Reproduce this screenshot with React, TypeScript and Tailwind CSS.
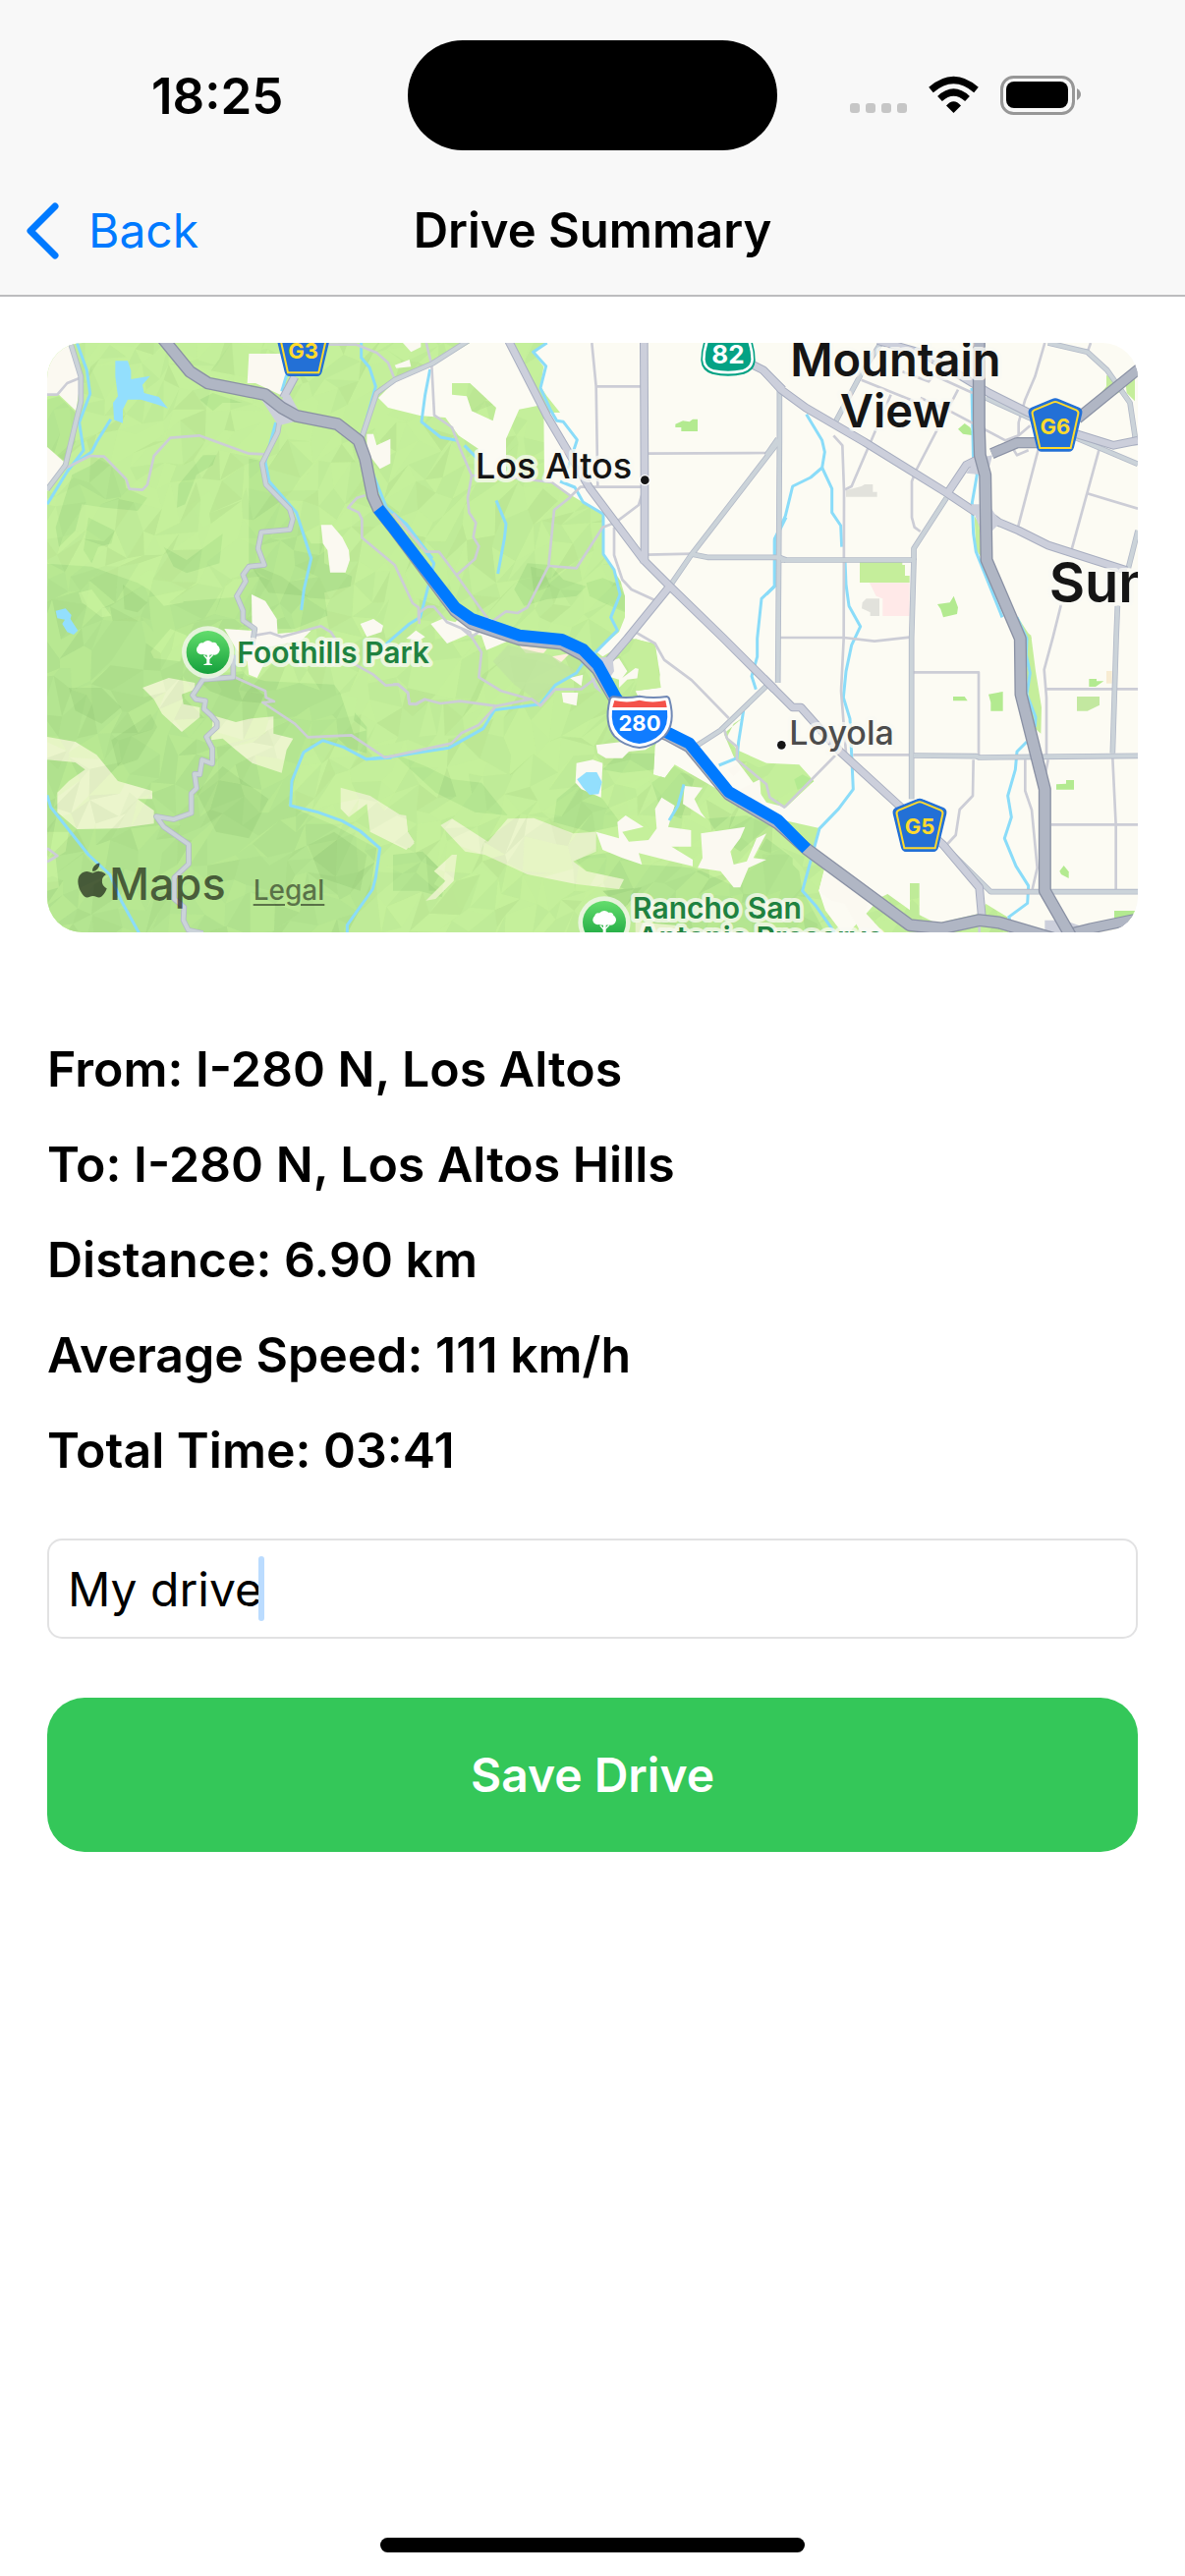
import { useState } from "react";
import type { ReactNode } from "react";
import { FaApple } from "react-icons/fa";

/* Map drawing: one unit is a third of a pixel. Each shape is given
   relative to the map sheet it lies on. */
type Sheet = "nw" | "n" | "ne" | "sw" | "s" | "se";
type Shape = [Sheet, string];

const SHIFT: Record<Sheet, string> = {
  nw: "translate(0 0)",
  n: "translate(1080 0)",
  ne: "translate(2220 0)",
  sw: "translate(0 900)",
  s: "translate(1080 900)",
  se: "translate(2220 900)",
};

const HILLS =
  "M0 0H1350L1315 27 1200 95 1085 145 1035 195 1065 225 1165 250 1240 255 1280 310 1340 350 1350 430 1560 450 1620 490 1720 550 1722 670 1775 755 1788 800 1788 865 1770 910 1700 970 1720 985 1810 930 1880 945 1895 1040 1890 1080 1820 1090 1830 1110 1900 1200 1880 1260 1875 1345 1910 1355 1940 1315 2010 1355 2070 1390 2180 1420 2250 1480 2385 1510 2360 1580 2400 1620 2380 1700 2400 1760 2460 1840H0Z M1425 320L1465 230 1540 215 1542 450 1425 440Z M1450 27H1550L1510 60 1540 100 1530 160 1550 190 1590 240 1550 240Z M1260 150H1315L1395 225 1385 265 1320 235 1305 190 1260 185Z M2150 1170L2120 1190 2100 1230 2130 1270 2220 1310 2320 1315 2365 1365 2280 1445 2220 1430 2180 1370 2120 1290 2090 1220Z M2460 1840L2570 1720 2590 1710 2660 1760 2740 1800 2870 1770 2890 1740 2955 1780 2960 1840Z M2658 1677H2687V1800H2658Z";

const DARK: Shape[] = [
  ["nw", "M24 200L60 190 110 240 110 330 80 390 24 345Z"],
  ["nw", "M160 400L190 375 260 440 265 470 330 500 300 540 200 530 130 520 110 600 60 650 50 590 100 430Z"],
  ["nw", "M500 370L540 370 530 400 480 430 445 520 420 530 425 460Z"],
  ["nw", "M640 380L690 390 700 460 770 540 830 640 870 640 870 700 955 740 950 770 870 790 880 860 780 900 640 900 600 800 640 700Z"],
  ["nw", "M490 200L530 180 620 210 560 210 530 235Z"],
  ["nw", "M150 560L230 600 220 640 180 650 160 700 135 660Z"],
  ["nw", "M380 650L450 690 560 610 550 700 450 730 410 710Z"],
  ["nw", "M0 700L160 710 300 760 400 820 640 800 640 930 0 930Z"],
  ["n", "M410 700L480 705 520 750 590 770 560 800 470 810 400 830 370 780Z"],
  ["n", "M590 760L640 745 690 765 708 800 708 850 640 820 600 800Z"],
  ["sw", "M0 0H420L500 140 620 130 690 200 780 290 860 340 800 380 760 540 900 600 1030 670 1010 800 940 930H0Z"],
  ["sw", "M620 140L690 160 900 170 950 240 1000 300 1000 380 820 330 700 230Z"],
  ["s", "M0 380L100 420 180 460 270 470 350 570 250 560 130 500Z"],
  ["s", "M500 520L560 470 640 520 700 600 600 620 490 590Z"],
  ["s", "M0 690L90 680 160 750 150 820 80 800 0 800Z"],
  ["s", "M550 700L680 680 760 720 920 730 1050 790 1140 640 1220 700 1220 930H820L720 800 600 750Z"],
  ["s", "M690 380L800 380 800 430 700 440 640 430Z"],
  ["s", "M790 470L860 420 920 460 880 580 820 560Z"],
  ["s", "M960 580L1080 570 1150 600 1060 680 1000 640Z"],
  ["se", "M0 690L60 700 100 740 110 800 180 930H0Z"],
];

const SHADE: Shape[] = [
  ["sw", "M90 180L190 180 250 240 190 290 110 250Z"],
  ["sw", "M220 340L340 260 360 300 300 400 240 420Z"],
  ["sw", "M490 160L620 150 720 230 600 220 520 190Z"],
  ["sw", "M480 500L560 420 700 520 640 640 540 620Z"],
  ["sw", "M820 660L900 620 1000 690 980 800 860 760Z"],
  ["nw", "M255 765L330 820 300 850 260 840Z"],
  ["nw", "M640 700L740 740 820 800 700 790Z"],
  ["s", "M100 690L150 740 125 780 160 800 110 800Z"],
  ["s", "M640 800L760 790 700 860Z"],
  ["n", "M420 710L460 720 480 770 430 790Z"],
];

const BRIGHT: Shape[] = [
  ["nw", "M300 740L340 720 430 780 440 820 380 830Z"],
  ["nw", "M120 790L160 780 220 860 190 865 130 820Z"],
  ["nw", "M460 520L520 480 560 560 500 590Z"],
  ["sw", "M340 70L400 0 450 20 430 100 350 90Z"],
  ["sw", "M920 200L970 210 960 280 1000 310 960 320Z"],
  ["sw", "M800 400L850 380 920 430 860 440Z"],
  ["sw", "M24 620L90 620 80 680 50 700 60 790 24 800Z"],
  ["s", "M180 790L260 720 350 790 300 880 200 850Z"],
  ["s", "M700 480L780 450 790 520 720 560Z"],
];

const MEADOW: Shape[] = [
  ["sw", "M315 180L395 150 475 165 475 185 435 200 440 230 490 240 490 270 435 315 375 260 350 215Z"],
  ["sw", "M24 330L110 345 175 385 240 465 345 495 345 520 300 520 350 555 350 595 240 610 115 612 55 560 55 500 90 465 140 430 110 408 24 400Z"],
  ["sw", "M530 265L600 285 640 275 715 268 715 320 775 335 755 370 740 440 650 410 600 370 560 335 525 340Z"],
  ["sw", "M920 485L1010 510 1120 580 1125 620 1145 650 1120 675 1010 620 1000 535 945 575 920 550Z"],
  ["s", "M145 600L180 580 290 650 350 580 430 578 550 625 620 620 620 680 550 710 590 740 705 765 690 795 560 780 410 750 280 690 220 680Z"],
  ["s", "M0 565L40 570 45 620 65 655 50 670 0 640Z"],
  ["s", "M100 830L160 770 125 740 180 690 195 690 185 770 130 825Z"],
  ["s", "M740 895L860 905 900 930H740Z"],
];

const OPEN: Shape[] = [
  ["nw", "M0 0H88L128 130 112 235 60 185 24 190 0 190Z"],
  ["nw", "M24 345L75 390 55 430 24 480Z"],
  ["nw", "M640 60H760L745 190 660 150H635Z"],
  ["nw", "M1000 305L1020 305 1030 340 1072 320V395L1040 412 1000 360Z"],
  ["nw", "M860 583L893 583 925 620 945 660 948 690 935 728H888L880 660 866 640Z"],
  ["nw", "M648 795L690 815 725 870 728 920H650Z"],
  ["nw", "M565 900L640 905 730 915 830 905 800 935 680 960 690 1000 665 1050 640 1040 635 1000 600 960Z"],
  ["nw", "M980 885L1020 870 1050 890 1045 910 1000 925Z"],
  ["nw", "M1085 95L1130 78 1135 100 1090 104Z"],
  ["nw", "M1110 27H1165V40L1135 55Z"],
  ["nw", "M1120 930L1150 905 1178 925 1160 935Z"],
  ["n", "M115 885L150 870 190 880 220 850 300 870 370 930 285 965 270 920 235 915 165 945Z"],
  ["s", "M515 195L565 195 560 235 520 225Z"],
  ["s", "M540 150L580 140 575 175Z"],
  ["s", "M620 355L700 345 800 350 770 370 720 375 700 395 650 395 625 380Z"],
  ["s", "M560 410L610 400 640 410 635 515 575 490 557 470Z"],
  ["s", "M660 100L690 90 715 130 700 150 740 120 760 125 755 150 715 155 690 180 690 155 655 145Z"],
  ["s", "M890 480L945 485 920 520 940 560 955 580 885 535Z"],
  ["s", "M820 515L860 540 840 605 910 615V665L850 665 915 705 915 725 830 705 750 685 760 720 700 700 640 675 620 620 690 640 685 590 710 570 765 605 700 620 720 650 780 645 805 610 800 550Z"],
  ["s", "M940 625L1075 605 1060 640 1030 680 1040 720 1080 710 1110 640 1140 625 1100 700 1140 705 1085 730 1060 790 1040 790 1000 740 930 730 945 700Z"],
  ["s", "M1060 490L1120 460 1125 535 1080 520Z"],
  ["s", "M1020 430L1050 415 1062 430 1040 450Z"],
  ["se", "M175 745L250 770 310 830 300 865 360 930H290L240 840 200 830 160 800Z"],
];

const PARKS: Shape[] = [
  ["n", "M862 275L885 265 905 268 915 260H930V297H880V285H862Z"],
  ["ne", "M585 290L605 273 622 285 632 310 600 305Z"],
  ["ne", "M522 825L560 820 572 800 585 835 582 855 540 865 532 840Z"],
  ["se", "M570 207H605L614 220H570Z"],
  ["se", "M678 200L722 192V251H685V225Z"],
  ["se", "M985 153H1008V160H1030L1005 177H985Z"],
  ["se", "M885 475L915 473V462H939V491H885Z"],
  ["se", "M895 740L908 723 923 742V762L900 750Z"],
  ["se", "M1062 861H1134V893H1062Z"],
  ["se", "M85 460L110 445 130 455 145 466 95 492Z"],
];

const LIGHT_PARKS: Shape[] = [
  ["ne", "M285 695H415V705H423V738H437V759H285Z"],
  ["ne", "M1038 125L1080 150 1090 170 1040 200 995 235 990 220 1038 160Z"],
  ["ne", "M1095 135L1125 130V205L1100 180Z"],
  ["ne", "M635 555L650 580 655 680 640 660Z"],
  ["ne", "M668 740L690 780 680 765Z"],
  ["ne", "M765 860L810 930 800 930Z"],
  ["se", "M780 0L808 20 822 130 840 240 838 320 815 300 800 200Z"],
  ["s", "M710 90L740 30 800 50 818 180 740 190 750 120Z"],
];

const WATER: Shape[] = [
  ["nw", "M232 82H270L280 112V138L338 128 315 155 320 180 365 192 393 227 360 215 310 200 270 200 255 230V272L228 262 225 210 240 190 232 130Z"],
  ["nw", "M50 845L80 838 98 858 95 870 118 905 105 918 85 910 70 885 78 872 55 868Z"],
  ["s", "M562 460L590 438H622L638 468 628 505 600 507 580 485Z"],
];

const STREAMS: Shape[] = [
  ["nw", "M115 27L145 110 155 182 122 270 135 355 85 420 24 520"],
  ["nw", "M218 260L175 330 160 360 85 410"],
  ["nw", "M755 125L740 175"],
  ["nw", "M722 270L690 390 702 450 785 545 830 685 808 780 800 843"],
  ["nw", "M983 27V72L1008 102 1027 160 985 310"],
  ["nw", "M1020 430L1060 530 1120 580 1200 685"],
  ["n", "M113 108L98 185 87 268 145 315 195 325"],
  ["n", "M218 340L262 385"],
  ["n", "M470 27L428 55 467 98 450 165 480 230 500 265 520 268 562 323 550 360 535 410"],
  ["n", "M510 450L555 468 580 513 642 550 642 672 675 720 693 795 665 865 685 905 620 970 580 1005 560 1035 495 1072 450 1130 310 1148 275 1205 170 1264 0 1290 -83 1298"],
  ["n", "M315 508L345 580 340 625 320 732"],
  ["n", "M0 548L40 580 125 700 105 780 83 865 50 885 0 928 -30 955"],
  ["n", "M1200 560L1165 630V770L1125 808 1112 930 1112 985 1095 1045 1108 1085"],
  ["ne", "M122 245L170 325 178 360 170 408 135 438 80 465 58 555 40 595 25 625V770L0 795"],
  ["ne", "M170 408L200 472V545L227 585 230 650"],
  ["ne", "M240 690L243 765 252 830 287 893 260 950 243 1030 235 1110 255 1175 265 1390 220 1450 162 1510 110 1700 150 1745 210 1830"],
  ["ne", "M627 165L632 400 643 430 628 515 632 610 640 665 720 865"],
  ["ne", "M765 865L795 930 793 980 805 1035 795 1100 822 1170 820 1200"],
  ["se", "M795 345L765 375 760 430 737 510 748 575 727 640 762 725 800 785 797 838 740 880 745 895"],
  ["s", "M1070 250L1055 345 1050 395 995 417"],
  ["s", "M888 475L870 540 843 585"],
  ["sw", "M24 508L35 545 150 690 215 750 250 830 305 930"],
  ["sw", "M1075 394L998 398 930 362 865 341 807 377 771 465 767 540 850 560 925 587 980 618 1040 670 1027 760 1018 795 940 905V930"],
];

const LANES: Shape[] = [
  ["nw", "M24 185H55L85 150 122 135"],
  ["nw", "M75 412L155 372 198 374 265 443 275 473 315 476 330 460 350 372 400 317 488 310 640 365 690 367"],
  ["nw", "M880 32H968L1030 57 1065 88 1085 138"],
  ["nw", "M995 493L970 500 943 530 975 545 985 565V622L1085 705 1140 822 1158 835V875"],
  ["nw", "M660 920L705 912 740 925 860 892 890 910 903 930 930 990 1020 1040 1058 1073 1097 1070 1125 1095 1130 1130 1150 1131 1178 1115"],
  ["n", "M95 0L118 95 126 248 180 285 205 350 240 432 228 500 232 545 253 577 245 620 262 648 250 687 195 735"],
  ["n", "M0 548L100 665H140L195 738 290 870"],
  ["n", "M240 432L380 440 485 453 543 495 572 467H765"],
  ["n", "M543 497L492 537 475 708 410 835 380 852 345 847 300 880 240 925 235 910 165 880 125 833H105L80 850V885"],
  ["n", "M475 708L560 715 640 590 680 575 750 522 760 490"],
  ["n", "M607 27L620 160 625 465"],
  ["n", "M620 160H765"],
  ["n", "M675 590V675L700 750 728 780 805 815"],
  ["n", "M775 365L1145 363"],
  ["n", "M775 674L915 671"],
  ["s", "M0 170L15 170 45 195 50 228 68 230 97 215 145 228 205 221 315 236 420 215 330 190 262 148 270 72 240 25 210 0"],
  ["s", "M315 236L260 295 210 318 178 350 0 388 -25 393 -127 325 -260 331 -300 290 -398 225 -363 222 -388 210 -390 190 -490 145"],
  ["s", "M420 212L450 235 495 185 575 184 620 150"],
  ["s", "M740 10L800 45 828 95 912 157 1025 273"],
  ["s", "M1010 305L1020 335 1050 360V400L1140 475 1150 515 1195 545 1350 387"],
  ["ne", "M205 310L232 340 237 480 236 930 228 1090 243 1280"],
  ["ne", "M290 140L450 205"],
  ["ne", "M380 185L260 465 240 475"],
  ["ne", "M585 170L455 420 444 450V560L452 590 470 603"],
  ["ne", "M415 115L495 145 510 125 630 180"],
  ["ne", "M470 195L560 235 730 325 770 310 805 280"],
  ["ne", "M850 27L820 130 790 200 770 270 770 310"],
  ["ne", "M832 345L768 590"],
  ["ne", "M1015 355L930 665"],
  ["ne", "M980 487L1134 533"],
  ["ne", "M990 27L982 50"],
  ["ne", "M900 825L875 925 848 1025 855 1110V1290"],
  ["ne", "M750 345L765 370 800 355"],
  ["se", "M42 27H237L330 38 437 26"],
  ["se", "M450 133H648V385"],
  ["se", "M855 184H1134"],
  ["se", "M265 385H437"],
  ["se", "M632 400L630 510 590 552 578 630 550 660"],
  ["se", "M790 400V495L810 553 827 730 812 795"],
  ["se", "M870 598H1134"],
  ["se", "M1057 395L1067 600V795"],
  ["se", "M860 400L845 480"],
  ["se", "M650 905V930"],
  ["sw", "M24 670L55 693 24 712"],
];

const STREETS: Shape[] = [
  ["nw", "M95 27L127 130V205L80 400 24 475"],
  ["nw", "M735 255L728 300 680 395 692 460 765 535 774 565 765 597 678 605 668 655 687 705 640 710 622 735 630 755 603 800 622 845V875L658 900 650 950"],
  ["sw", "M592 80V148L500 155 468 203 477 215 507 220 503 245 525 265 542 285V300L510 330 528 365V412L497 400 490 445 474 443 480 487 464 503V563L410 582 357 573 380 605 456 658V718L412 760V825L442 850 440 890 455 920 500 930"],
  ["nw", "M985 315L1030 180 1085 140 1200 90 1310 20"],
  ["n", "M1180 165V330L1178 650 1175 1065"],
  ["n", "M1180 325L910 675 845 770"],
  ["n", "M915 673L960 682H1178"],
  ["n", "M1180 682L1200 690"],
  ["ne", "M45 690H450L443 930V1420"],
  ["ne", "M450 690V655L550 500"],
  ["ne", "M210 270L290 120 350 27"],
  ["ne", "M0 370L35 320"],
  ["ne", "M860 27L980 55 1040 110 1110 210 1125 310V340"],
  ["ne", "M670 195L800 255 940 315 1134 397"],
  ["ne", "M1134 600L1105 715"],
  ["ne", "M1072 830L1068 930 1057 1280"],
  ["s", "M930 355L1000 310 1150 165"],
  ["se", "M450 387L640 389 650 393 830 391 1134 388"],
  ["se", "M540 660L685 803H1134"],
];

const AVENUES: Shape[] = [
  ["n", "M350 15L470 250 600 470 765 690 845 770 1010 930 1165 1085"],
  ["n", "M766 27L768 440V700"],
  ["n", "M845 770L715 930 655 1000"],
  ["n", "M1090 90L1130 110 1190 170"],
  ["ne", "M-10 110L45 170 120 225 300 330 550 485 640 545"],
  ["ne", "M340 20L480 60 680 180 800 240 930 300 1060 340 1134 325"],
  ["ne", "M550 490L610 400 640 385"],
  ["ne", "M690 560L710 575 770 600 860 645 1000 690 1100 722"],
  ["se", "M-10 150L80 240H105L225 375 400 535 540 660 650 790 658 880"],
  ["nw", "M780 130L745 195"],
];

const HIGHWAYS: Shape[] = [
  ["nw", "M370 5L460 115 515 150 690 185 740 225 785 250 910 275 975 325 995 380 1018 495 1035 533 1080 590 1270 845 1320 884 1465 932 1595 945 1660 980 1705 1025 1760 1120 1810 1180 1920 1225 1985 1260 2105 1405 2255 1494 2342 1572 2658 1805 2755 1815 2870 1790 2930 1797 3110 1850"],
  ["ne", "M649 15V280L652 370 668 430 672 690 775 930 777 1100 850 1390V1700L930 1840"],
];

const RAMPS: Shape[] = [
  ["ne", "M688 365L765 332H840"],
  ["ne", "M950 258L1145 100"],
  ["se", "M930 930L990 915 1134 885"],
];

const ROUTE =
  "M1035 533L1080 590 1270 835 1320 870 1465 920 1595 933 1660 963 1705 1010 1760 1110 1810 1175 1920 1218 1985 1250 2105 1398 2255 1484 2342 1572";

/* Triangulated relief: a jittered grid whose facets vary slightly in tone. */
function buildRelief() {
  let seed = 17;
  const rnd = () => {
    seed = (seed * 1103515245 + 12345) % 2147483648;
    return seed / 2147483648;
  };
  const cols = 52;
  const rows = 32;
  const step = 60;
  const pts: [number, number][][] = [];
  for (let r = 0; r <= rows; r++) {
    const line: [number, number][] = [];
    for (let c = 0; c <= cols; c++) {
      line.push([
        Math.round(c * step + (rnd() - 0.5) * 60),
        Math.round(r * step + (rnd() - 0.5) * 80),
      ]);
    }
    pts.push(line);
  }
  const light: string[] = [];
  const dark: string[] = [];
  const darker: string[] = [];
  for (let r = 0; r < rows; r++) {
    for (let c = 0; c < cols; c++) {
      const [a, b, d, e] = [pts[r][c], pts[r][c + 1], pts[r + 1][c], pts[r + 1][c + 1]];
      for (const t of [[a, b, d], [b, e, d]]) {
        const k = rnd();
        const path = "M" + t.map((p) => p.join(" ")).join("L") + "Z";
        if (k < 0.28) light.push(path);
        else if (k < 0.55) dark.push(path);
        else if (k < 0.68) darker.push(path);
      }
    }
  }
  return { light: light.join(""), dark: dark.join(""), darker: darker.join("") };
}
const RELIEF = buildRelief();

function Areas({ items, fill, opacity = 1 }: { items: Shape[]; fill: string; opacity?: number }) {
  return (
    <g fill={fill} opacity={opacity}>
      {items.map(([sheet, d], i) => (
        <path key={i} d={d} transform={SHIFT[sheet]} />
      ))}
    </g>
  );
}

function Lines({ items, stroke, width }: { items: Shape[]; stroke: string; width: number }) {
  return (
    <g fill="none" stroke={stroke} strokeWidth={width} strokeLinejoin="round">
      {items.map(([sheet, d], i) => (
        <path key={i} d={d} transform={SHIFT[sheet]} />
      ))}
    </g>
  );
}

function CountyShield({ x, y, label }: { x: number; y: number; label: string }) {
  return (
    <g transform={`translate(${x} ${y})`}>
      <path
        d="M-9 -80Q0 -84 9 -80L72 -54Q82 -49 80 -38L55 66Q52 77 42 77H-42Q-52 77 -55 66L-80 -38Q-82 -49 -72 -54Z"
        fill="#2370d6"
        stroke="#2370d6"
        strokeWidth="4"
      />
      <path
        d="M-6 -72Q0 -74 6 -72L64 -48Q72 -44 70 -36L47 68H-47L-70 -36Q-72 -44 -64 -48Z"
        fill="none"
        stroke="#ffda2d"
        strokeWidth="6"
      />
      <text y="25" textAnchor="middle" fontSize="66" fontWeight="700" fill="#ffda2d">
        {label}
      </text>
    </g>
  );
}

function TreePin({ x, y }: { x: number; y: number }) {
  return (
    <g transform={`translate(${x} ${y})`}>
      <circle r="80" fill="#eef6e8" opacity="0.85" />
      <circle r="66" fill="url(#pin)" />
      <g fill="#fff">
        <circle cx="-20" cy="-8" r="15" />
        <circle cx="20" cy="-8" r="16" />
        <circle cx="0" cy="-18" r="18" />
        <circle cx="-18" cy="-18" r="11" />
        <circle cx="17" cy="-20" r="11" />
        <ellipse cx="0" cy="-5" rx="30" ry="13" />
        <path d="M-3 0H5V34L13 37V39H-13V37L-4 34V22L-14 10-11 8-3 16Z" />
        <path d="M4 22L17 8 14 6 4 16Z" />
      </g>
    </g>
  );
}

function Label(props: { x: number; y: number; size: number; weight: number; fill: string; children: ReactNode; middle?: boolean }) {
  return (
    <text
      x={props.x}
      y={props.y}
      fontSize={props.size}
      fontWeight={props.weight}
      fill={props.fill}
      textAnchor={props.middle ? "middle" : "start"}
      stroke="#fafaf4"
      strokeOpacity="0.75"
      strokeWidth="24"
      strokeLinejoin="round"
      paintOrder="stroke"
    >
      {props.children}
    </text>
  );
}

function RouteMap() {
  return (
    <svg viewBox="24 27 3330 1800" className="block h-auto w-full" role="img" aria-label="Map of the drive" fontFamily="Inter, sans-serif">
      <defs>
        <clipPath id="hills">
          <path d={HILLS} />
        </clipPath>
        <linearGradient id="pin" x1="0" y1="0" x2="0" y2="1">
          <stop offset="0" stopColor="#63dd6c" />
          <stop offset="1" stopColor="#14a03c" />
        </linearGradient>
      </defs>
      <rect x="0" y="0" width="3400" height="1850" fill="#fcfbf3" />
      <path d={HILLS} fill="#c4ef9b" />
      <g clipPath="url(#hills)">
        <Areas items={DARK} fill="#b4e591" />
        <Areas items={SHADE} fill="#a9db88" />
        <Areas items={BRIGHT} fill="#c4f09b" />
        <Areas items={MEADOW} fill="#ebf5cc" />
        <path d={RELIEF.light} fill="#ccf99a" opacity="0.16" />
        <path d={RELIEF.dark} fill="#4a7a3a" opacity="0.03" />
        <path d={RELIEF.darker} fill="#4a7a3a" opacity="0.06" />
      </g>
      <Areas items={OPEN} fill="#fbf9f1" />
      <Areas items={LIGHT_PARKS} fill="#c5ee9b" />
      <Areas items={PARKS} fill="#b3ea90" />
      <g transform={SHIFT.ne}>
        <path d="M315 760H437V861H355V808L335 800Z" fill="#ffe9e8" />
        <path d="M243 477L290 465 300 459H325V482H338V497H243Z M293 820L305 808H345V861H317V850L291 838Z" fill="#e2e2dc" />
        <path d="M1038 1029H1055V1067H1038Z" fill="#f8ecd2" />
        <path d="M948 1107H1017V1133L980 1151H948Z" fill="#c3e8a0" />
      </g>
      <g transform={SHIFT.s}>
        <path d="M385 50L470 62 460 74H405Z M485 85L540 75 510 105Z" fill="#fdeedd" />
        <path d="M305 100L350 50 480 80 560 130 500 170 440 220 370 170Z" fill="#bfe2a0" opacity="0.7" />
      </g>
      <Areas items={WATER} fill="#93dffd" />
      <Lines items={STREAMS} stroke="#8adcf9" width={9} />
      <Lines items={LANES} stroke="#cccdd6" width={8} />
      <Lines items={STREETS} stroke="#b3bac8" width={17} />
      <Lines items={STREETS} stroke="#cbd3d9" width={12} />
      <Lines items={AVENUES} stroke="#a8aec0" width={26} />
      <Lines items={AVENUES} stroke="#cccfdb" width={20} />
      <g fill="#cccfdb">
        <path d="M675 195L735 215 750 180 765 185 795 240 790 265 730 280Z" />
        <path d="M2830 425L2860 380 2910 370 2900 410 2880 430Z M2870 555L2905 530 2935 575 2905 605Z M2845 520H2870V590Z" />
        <path d="M1690 990L1750 985 1755 1030 1735 1060Z M1680 1030L1695 1080 1720 1100Z" />
        <path d="M3070 1790L3130 1790 3200 1815 3180 1840H3070Z" />
      </g>
      <Lines items={RAMPS} stroke="#8a91a4" width={34} />
      <Lines items={RAMPS} stroke="#b0b6c4" width={27} />
      <Lines items={HIGHWAYS} stroke="#8a91a4" width={39} />
      <Lines items={HIGHWAYS} stroke="#b0b6c4" width={31} />
      <path d={ROUTE} fill="none" stroke="#007aff" strokeWidth="36" strokeLinejoin="round" />

      <g transform={SHIFT.nw}>
        <CountyShield x={806} y={50} label="G3" />
      </g>
      <g transform={SHIFT.ne}>
        <CountyShield x={882} y={280} label="G6" />
      </g>
      <g transform={SHIFT.se}>
        <CountyShield x={468} y={602} label="G5" />
      </g>

      <g transform={SHIFT.n}>
        <path d="M958 0H1088Q1106 40 1106 80 1104 112 1072 122 1023 134 974 122 942 112 940 80 940 40 958 0Z" fill="#04a284" />
        <path d="M968 0H1078Q1097 40 1097 78 1095 105 1066 113 1023 122 980 113 951 105 949 78 949 40 968 0Z" fill="none" stroke="#fff" strokeWidth="8" />
        <text x="1023" y="89" textAnchor="middle" fontSize="78" fontWeight="700" fill="#fff">82</text>
      </g>

      <g transform={SHIFT.s}>
        <path
          d="M672 207Q713 214 752 206 792 214 836 207 842 208 844 216 864 290 828 328 798 358 752 363 706 358 676 328 644 290 662 216 664 208 672 207Z"
          fill="#fff"
          stroke="#7189b5"
          strokeWidth="6"
        />
        <path d="M669 249H837Q842 295 818 320 792 346 752 351 712 346 688 320 664 295 669 249Z" fill="#107cff" />
        <path d="M676 219Q718 228 752 218 790 228 832 219L836 240H670Z" fill="#f4524a" />
        <text x="753" y="311" textAnchor="middle" fontSize="66" fontWeight="700" fill="#fff">280</text>
      </g>

      <g transform={SHIFT.n}>
        <Label x={252} y={442} size={108} weight={500} fill="#151515">Los Altos</Label>
        <circle cx="769" cy="446" r="17" fill="#fff" />
        <circle cx="769" cy="446" r="13" fill="#151515" />
      </g>
      <g transform={SHIFT.ne}>
        <Label x={394} y={129} size={141} weight={600} fill="#151515" middle>Mountain</Label>
        <Label x={394} y={284} size={141} weight={600} fill="#151515" middle>View</Label>
        <Label x={863} y={820} size={168} weight={600} fill="#151515">Sunnyvale</Label>
      </g>
      <g transform={SHIFT.se}>
        <circle cx="46" cy="355" r="17" fill="#fff" />
        <circle cx="46" cy="355" r="13" fill="#151515" />
        <Label x={70} y={353} size={102} weight={500} fill="#4c4c4c">Loyola</Label>
      </g>
      <g transform={SHIFT.sw}>
        <TreePin x={515} y={72} />
        <Label x={604} y={105} size={90} weight={600} fill="#1f8240">Foothills Park</Label>
      </g>
      <g transform={SHIFT.s}>
        <TreePin x={645} y={897} />
        <Label x={732} y={884} size={90} weight={600} fill="#1f8240">Rancho San</Label>
        <Label x={746} y={976} size={90} weight={600} fill="#1f8240">Antonio Preserve</Label>
      </g>
    </svg>
  );
}

function StatusIcons() {
  return (
    <svg viewBox="865 78 236 40" className="h-10 w-[236px]" aria-label="Wi-Fi on, battery full">
      <g fill="#c6c6c6">
        <rect x="865" y="106" width="10" height="10" rx="3" />
        <rect x="881" y="106" width="10" height="10" rx="3" />
        <rect x="897" y="106" width="10" height="10" rx="3" />
        <rect x="913" y="106" width="10" height="10" rx="3" />
      </g>
      <path d="M970.5 116L963 108.500Q970.500 100 978 108.500Z" />
      <g fill="none" stroke="#000" strokeWidth="7">
        <path d="M956.500 101.500Q970.500 88.500 984.500 101.500" />
        <path d="M947.500 92.500Q970.500 72.500 993.500 92.500" />
      </g>
      <rect x="1019.500" y="79.500" width="73" height="37" rx="12" fill="none" stroke="#979797" strokeWidth="3" />
      <rect x="1024" y="84" width="63" height="27" rx="8" />
      <path d="M1096 91Q1100 93.500 1100 97 1100 100.500 1096 103Z" fill="#979797" />
    </svg>
  );
}

const DETAILS: [string, string][] = [
  ["From", "I-280 N, Los Altos"],
  ["To", "I-280 N, Los Altos Hills"],
  ["Distance", "6.90 km"],
  ["Average Speed", "111 km/h"],
  ["Total Time", "03:41"],
];

export default function App() {
  const [name, setName] = useState("My drive");

  return (
    <div className="flex min-h-screen flex-col bg-white font-['Inter',sans-serif] text-[48px] leading-[61px] text-black">
      <header className="border-b-2 border-[#bcbcbe] bg-[#f8f8f8]">
        <div className="grid grid-cols-[1fr_376px_1fr] items-center pt-[41px]">
          <span className="pl-[154px] text-[51px] font-semibold">18:25</span>
          <div className="h-28 rounded-[56px] bg-black" />
          <div className="flex justify-end pr-[105px]">
            <StatusIcons />
          </div>
        </div>
        <div className="grid grid-cols-[1fr_auto_1fr] items-center pt-[51px] pb-[35px]">
          <button type="button" className="flex items-center gap-[30px] pl-[26px] text-left text-[#007aff]">
            <svg viewBox="0 0 34 58" className="h-[58px] w-[34px]" aria-hidden="true">
              <path d="M30 4L5 29L30 54" fill="none" stroke="currentColor" strokeWidth="7" strokeLinecap="round" strokeLinejoin="round" />
            </svg>
            Back
          </button>
          <h1 className="text-[49px] font-semibold">Drive Summary</h1>
        </div>
      </header>

      <main className="flex-1 px-12 pt-[47px]">
        <section className="relative overflow-hidden rounded-[36px]">
          <RouteMap />
          <div className="absolute bottom-3 left-[31px] flex items-baseline text-black/60">
            <FaApple className="h-10 w-[30px]" aria-hidden="true" />
            <span className="ml-0.5 text-[45px] font-medium">Maps</span>
            <a href="#legal" className="ml-7 text-[28px] font-medium text-black/50 underline underline-offset-4">
              Legal
            </a>
          </div>
        </section>

        <div className="flex flex-col gap-9 pt-[109px] text-[50px] font-semibold">
          {DETAILS.map(([term, value]) => (
            <p key={term}>
              {term}: {value}
            </p>
          ))}
        </div>

        <div className="relative mt-[59px]">
          <input
            aria-label="Drive name"
            value={name}
            onChange={(e) => setName(e.target.value)}
            className="block h-[102px] w-full rounded-[15px] border-2 border-[#e2e2e3] bg-white px-[19px] outline-none"
          />
          <div aria-hidden="true" className="pointer-events-none absolute inset-0 flex items-center overflow-hidden px-[21px]">
            <span className="invisible whitespace-pre">{name}</span>
            <span className="-ml-1 h-[66px] w-1.5 rounded-sm bg-[#bbdcff]" />
          </div>
        </div>

        <button type="button" className="mt-[60px] h-[157px] w-full rounded-[38px] bg-[#34c759] font-semibold text-white">
          Save Drive
        </button>
      </main>

      <div className="flex justify-center pb-6">
        <div className="h-[15px] w-[432px] rounded-full bg-black" />
      </div>
    </div>
  );
}
